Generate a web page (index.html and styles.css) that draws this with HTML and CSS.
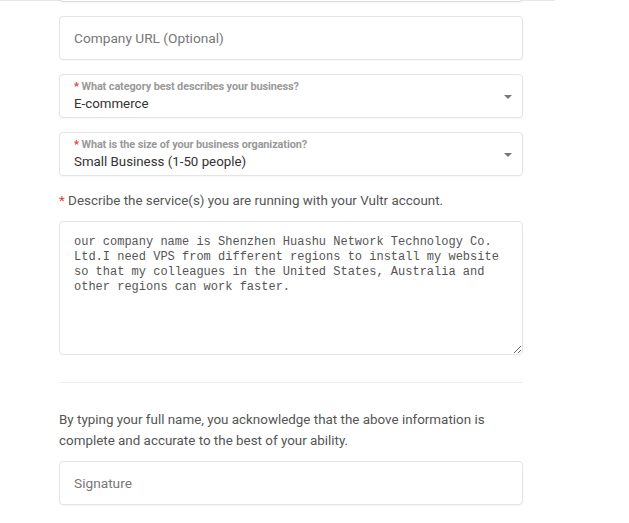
FILE: index.html
```html
<!DOCTYPE html>
<html lang="en">
<head>
<meta charset="UTF-8" />
<meta name="viewport" content="width=device-width, initial-scale=1" />
<title>Account Verification</title>
<link rel="stylesheet" href="styles.css">
</head>
<body>
  <div class="top-line"></div>
  <form class="form" novalidate>
    <div class="field field-cut"></div>
    <div class="field">
      <input type="text" placeholder="Company URL (Optional)" />
    </div>
    <div class="field select">
      <div class="select-label"><span class="req">*</span> What category best describes your business?</div>
      <div class="select-value">E-commerce</div>
      <span class="caret"></span>
    </div>
    <div class="field select">
      <div class="select-label"><span class="req">*</span> What is the size of your business organization?</div>
      <div class="select-value">Small Business (1-50 people)</div>
      <span class="caret"></span>
    </div>
    <label class="label" for="services"><span class="req">*</span> Describe the service(s) you are running with your Vultr account.</label>
    <textarea id="services" class="textarea">our company name is Shenzhen Huashu Network Technology Co. Ltd.I need VPS from different regions to install my website so that my colleagues in the United States, Australia and other regions can work faster.</textarea>
    <hr class="divider" />
    <p class="note">By typing your full name, you acknowledge that the above information is complete and accurate to the best of your ability.</p>
    <div class="field">
      <input type="text" placeholder="Signature" />
    </div>
  </form>
</body>
</html>
```

FILE: styles.css
```css
body {
  margin: 0; background: #fff;
  font-family: Roboto, "Liberation Sans", sans-serif;
  color: #444;
}
.top-line {
  width: 555px; height: 1px; background: #e6e6ec;
}
.form {
  width: 464px; margin-left: 59px;
  display: flex; flex-direction: column;
}
.field {
  position: relative;
  height: 44px; box-sizing: border-box;
  border: 1px solid #e3e3e8; border-radius: 4px;
  box-shadow: 0 1px 2px rgba(0,0,0,0.04);
  background: #fff;
  margin-bottom: 14px;
}
.field-cut {
  margin-top: -43px; border-color: #d8d8e0;
}
.field input {
  width: 100%; height: 100%; box-sizing: border-box;
  border: none; outline: none; background: transparent;
  padding: 0 14px;
  font-family: inherit; font-size: 13.7px; color: #333;
}
.field input::placeholder {
  color: #777;
}
.select {
  padding: 5px 14px 0;
}
.select-label {
  font-size: 10.9px; font-weight: 700; color: #999;
  line-height: 14px;
  letter-spacing: -0.1px;
}
.select-value {
  font-size: 13.3px; color: #333; line-height: 20px;
}
.req {
  color: #e53935;
}
.caret {
  position: absolute; right: 10px; top: 20px;
  width: 0; height: 0;
  border-left: 4px solid transparent; border-right: 4px solid transparent;
  border-top: 4px solid #777;
}
.label {
  margin-top: 1px; margin-bottom: 10px;
  font-size: 13.4px; line-height: 20px; color: #555;
}
.textarea {
  height: 134px; box-sizing: border-box;
  border: 1px solid #e3e3e8; border-radius: 4px;
  padding: 13px 14px 12px;
  font-family: "Liberation Mono", monospace; font-size: 12px; line-height: 15px;
  color: #555; resize: vertical; outline: none;
}
.divider {
  width: 100%; margin: 27px 0 0; border: none; border-top: 1px solid #eee;
}
.note {
  margin: 26px 0 10px;
  font-size: 13.4px; line-height: 21px; color: #555;
}
```
